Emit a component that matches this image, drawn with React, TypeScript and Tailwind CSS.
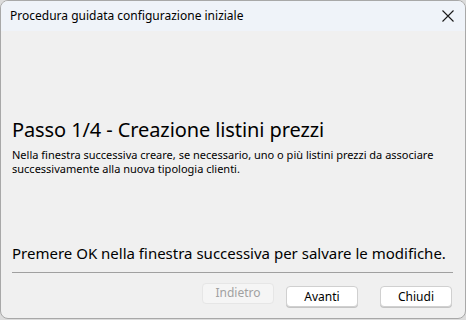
import React from 'react';

const font = { fontFamily: '"Noto Sans", "Open Sans", sans-serif' };

function DialogButton({ label, disabled }: { label: string; disabled?: boolean }) {
  return (
    <button
      disabled={disabled}
      className={
        disabled
          ? 'h-[21px] w-[72px] rounded-[4px] border border-[#e6e6e6] bg-[#f5f5f5] text-[12px] leading-none text-[#a1a1a1]'
          : 'h-[21px] w-[72px] rounded-[4px] border border-[#d0d0d0] bg-white text-[12px] leading-none text-black shadow-[0_1px_0_#c4c4c4]'
      }
    >
      {label}
    </button>
  );
}

export default function App() {
  return (
    <div className="h-[320px] w-[466px] bg-[#dcdcdc]" style={font}>
      <div className="flex h-[319px] w-[466px] flex-col overflow-hidden rounded-[8px] border border-[#a8a8a8] bg-[#f0f0f0]">
        <div className="flex h-[30px] shrink-0 items-center justify-between bg-[#eff3f9] pl-[9px] pr-[8px]">
          <span className="text-[12px] text-black">Procedura guidata configurazione iniziale</span>
          <svg width="16" height="16" viewBox="0 0 16 16" className="mr-[1px]">
            <path d="M2.5 2.5 L13.5 13.5 M13.5 2.5 L2.5 13.5" stroke="#1a1a1a" strokeWidth="1.1" fill="none" />
          </svg>
        </div>
        <div className="flex flex-1 flex-col px-[11px]">
          <h1 className="mt-[85px] whitespace-nowrap text-[20px] leading-[28px] tracking-[-0.1px] text-black">
            Passo 1/4 - Creazione listini prezzi
          </h1>
          <p className="mt-[4px] whitespace-nowrap text-[11px] leading-[14px] text-black">
            Nella finestra successiva creare, se necessario, uno o più listini prezzi da associare
            <br />
            successivamente alla nuova tipologia clienti.
          </p>
          <div className="flex-1" />
          <p className="whitespace-nowrap text-[15px] leading-[22px] text-black">
            Premere OK nella finestra successiva per salvare le modifiche.
          </p>
          <div className="mt-[8px] h-px w-[441px] bg-[#a0a0a0]" />
          <div className="mb-[11px] mt-[10px] flex justify-end pr-[2px]">
            <DialogButton label="Indietro" disabled />
            <div className="ml-[12px]">
              <DialogButton label="Avanti" />
            </div>
            <div className="ml-[22px]">
              <DialogButton label="Chiudi" />
            </div>
          </div>
        </div>
      </div>
    </div>
  );
}
